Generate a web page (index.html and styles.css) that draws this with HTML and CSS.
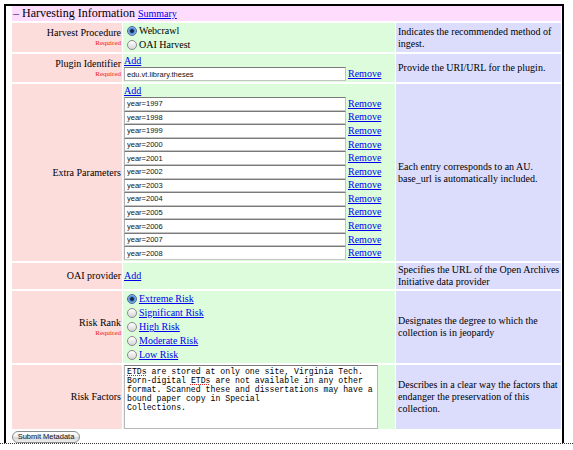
FILE: index.html
```html
<!DOCTYPE html>
<html>
<head>
<meta charset="utf-8">
<title>Harvesting Information</title>
<link rel="stylesheet" href="styles.css">
</head>
<body>
<div class="page">
  <form class="box">
    <table class="harvest">
      <colgroup>
        <col class="c-label">
        <col class="c-field">
        <col class="c-desc">
      </colgroup>
      <tr class="r-title">
        <td colspan="3" class="title"><span class="toggle">–</span> Harvesting Information <a href="#" class="summary">Summary</a></td>
      </tr>
      <tr class="r-proc">
        <td class="label">Harvest Procedure<span class="req">Required</span></td>
        <td class="field">
          <label class="opt"><input type="radio" class="radio" name="proc" checked>Webcrawl</label>
          <label class="opt"><input type="radio" class="radio" name="proc">OAI Harvest</label>
        </td>
        <td class="desc">Indicates the recommended method of ingest.</td>
      </tr>
      <tr class="r-plugin">
        <td class="label">Plugin Identifier<span class="req">Required</span></td>
        <td class="field">
          <a href="#" class="add">Add</a>
          <div class="entry tall"><input class="text" value="edu.vt.library.theses"><a href="#" class="remove">Remove</a></div>
        </td>
        <td class="desc">Provide the URI/URL for the plugin.</td>
      </tr>
      <tr class="r-extra">
        <td class="label">Extra Parameters</td>
        <td class="field">
          <a href="#" class="add">Add</a>
          <div class="entry"><input class="text" value="year=1997"><a href="#" class="remove">Remove</a></div>
          <div class="entry"><input class="text" value="year=1998"><a href="#" class="remove">Remove</a></div>
          <div class="entry"><input class="text" value="year=1999"><a href="#" class="remove">Remove</a></div>
          <div class="entry"><input class="text" value="year=2000"><a href="#" class="remove">Remove</a></div>
          <div class="entry"><input class="text" value="year=2001"><a href="#" class="remove">Remove</a></div>
          <div class="entry"><input class="text" value="year=2002"><a href="#" class="remove">Remove</a></div>
          <div class="entry"><input class="text" value="year=2003"><a href="#" class="remove">Remove</a></div>
          <div class="entry"><input class="text" value="year=2004"><a href="#" class="remove">Remove</a></div>
          <div class="entry"><input class="text" value="year=2005"><a href="#" class="remove">Remove</a></div>
          <div class="entry"><input class="text" value="year=2006"><a href="#" class="remove">Remove</a></div>
          <div class="entry"><input class="text" value="year=2007"><a href="#" class="remove">Remove</a></div>
          <div class="entry"><input class="text" value="year=2008"><a href="#" class="remove">Remove</a></div>
        </td>
        <td class="desc">Each entry corresponds to an AU. base_url is automatically included.</td>
      </tr>
      <tr class="r-oai">
        <td class="label">OAI provider</td>
        <td class="field"><a href="#" class="add">Add</a></td>
        <td class="desc">Specifies the URL of the Open Archives Initiative data provider</td>
      </tr>
      <tr class="r-risk">
        <td class="label">Risk Rank<span class="req">Required</span></td>
        <td class="field">
          <label class="opt risk"><input type="radio" class="radio" name="risk" checked><a href="#">Extreme Risk</a></label>
          <label class="opt risk"><input type="radio" class="radio" name="risk"><a href="#">Significant Risk</a></label>
          <label class="opt risk"><input type="radio" class="radio" name="risk"><a href="#">High Risk</a></label>
          <label class="opt risk"><input type="radio" class="radio" name="risk"><a href="#">Moderate Risk</a></label>
          <label class="opt risk"><input type="radio" class="radio" name="risk"><a href="#">Low Risk</a></label>
        </td>
        <td class="desc">Designates the degree to which the collection is in jeopardy</td>
      </tr>
      <tr class="r-factors">
        <td class="label">Risk Factors</td>
        <td class="field">
          <div class="ta" role="textbox" aria-multiline="true">
            <span class="ln"><span class="sp">ETDs</span> are stored at only one site, Virginia Tech.</span>
            <span class="ln">Born-digital <span class="sp">ETDs</span> are not available in any other</span>
            <span class="ln">format. Scanned these and dissertations may have a</span>
            <span class="ln">bound paper copy in Special</span>
            <span class="ln">Collections.</span>
          </div>
        </td>
        <td class="desc">Describes in a clear way the factors that endanger the preservation of this collection.</td>
      </tr>
    </table>
    <button type="button" class="submit">Submit Metadata</button>
  </form>
</div>
</body>
</html>
```

FILE: styles.css
```css
html, body {
  margin: 0;
  padding: 0;
  background: #fff;
}

body {
  font-family: "Liberation Serif", "Times New Roman", serif;
  font-size: 10px;
  color: #000;
}

a {
  color: #0000ee;
  text-decoration: underline;
}

.page {
  padding-top: 4px;
  height: 439px;
  border-bottom: 1px dotted #333;
}

.box {
  display: block;
  margin: 0 9px 0 4px;
  height: 439px;
  box-sizing: border-box;
  border: 2px solid #000;
  border-bottom: 0;
  padding: 0 0 0 5px;
}

.harvest {
  width: 551px;
  table-layout: fixed;
  border-collapse: separate;
  border-spacing: 1px 2px;
  margin-top: -2px;
}

.c-label { width: 110px; }
.c-field { width: 272px; }
.c-desc { width: 165px; }

.harvest td {
  padding: 0 1px;
  vertical-align: middle;
  line-height: 12px;
}

.r-title td { height: 15px; }
.r-proc td { height: 29px; }
.r-plugin td { height: 28px; }
.r-extra td { height: 177px; }
.r-oai td { height: 26px; }
.r-risk td { height: 72px; }
.r-factors td { height: 64px; }

.title {
  background: #fddcfd;
  font-size: 12px;
  line-height: 15px !important;
  white-space: nowrap;
}

.toggle {
  color: #3b2a7e;
}

.summary {
  font-size: 10px;
}

.label {
  background: #fddcdc;
  text-align: right;
}

.req {
  display: block;
  font-size: 7px;
  line-height: 9px;
  color: #f01818;
}

.field {
  background: #dcfcdc;
}

.desc {
  background: #dcdcfc;
  padding: 0 0 0 2px !important;
}

.opt {
  display: flex;
  align-items: center;
  height: 14px;
  line-height: 14px;
}

.opt.risk {
  height: 14.2px;
}

.radio {
  -webkit-appearance: none;
  appearance: none;
  box-sizing: border-box;
  width: 10px;
  height: 10px;
  margin: 0 2px 0 3px;
  border: 1px solid #8a8a8a;
  border-radius: 50%;
  background: linear-gradient(#ffffff, #d6d6d6);
  flex: none;
}

.radio:checked {
  border-color: #46689a;
  background: radial-gradient(circle at 50% 50%, #14264d 0, #14264d 1.4px, #4a86cf 2.4px, #8fbbeb 4px, #b8d5f4 5px);
}

.add {
  display: block;
  width: max-content;
  line-height: 12px;
}

.entry {
  display: flex;
  align-items: center;
  height: 13.6px;
}

.entry.tall {
  height: 14px;
}

.text {
  box-sizing: border-box;
  width: 222px;
  height: 100%;
  margin: 0;
  padding: 0 2px;
  border: 1px solid #c4c4c4;
  border-top-color: #7a7a7a;
  border-left-color: #b0b0b0;
  background: #fff;
  font-family: "Liberation Sans", Arial, sans-serif;
  font-size: 7.5px;
  color: #111;
  outline: none;
}

.remove {
  margin-left: 2px;
  line-height: 12px;
}

.ta {
  box-sizing: border-box;
  width: 254px;
  height: 64px;
  border: 1px solid #b8b8b8;
  border-top-color: #7a7a7a;
  background: #fff;
  padding: 1px 2px 0;
  font-family: "Liberation Mono", "Courier New", monospace;
  font-size: 8.2px;
  line-height: 9px;
  overflow: hidden;
  color: #000;
}

.ln {
  display: block;
  white-space: pre;
  height: 9px;
}

.sp {
  text-decoration: underline dotted #e02020;
  text-underline-offset: 1px;
}

.submit {
  display: block;
  box-sizing: border-box;
  width: 68px;
  height: 12px;
  margin: 0 0 0 1px;
  padding: 0;
  border: 1px solid #8c8c8c;
  border-radius: 6px;
  background: linear-gradient(#ffffff, #f0f0f0 45%, #dadada 55%, #ececec);
  font-family: "Liberation Sans", Arial, sans-serif;
  font-size: 7.5px;
  line-height: 10px;
  color: #111;
}
```
